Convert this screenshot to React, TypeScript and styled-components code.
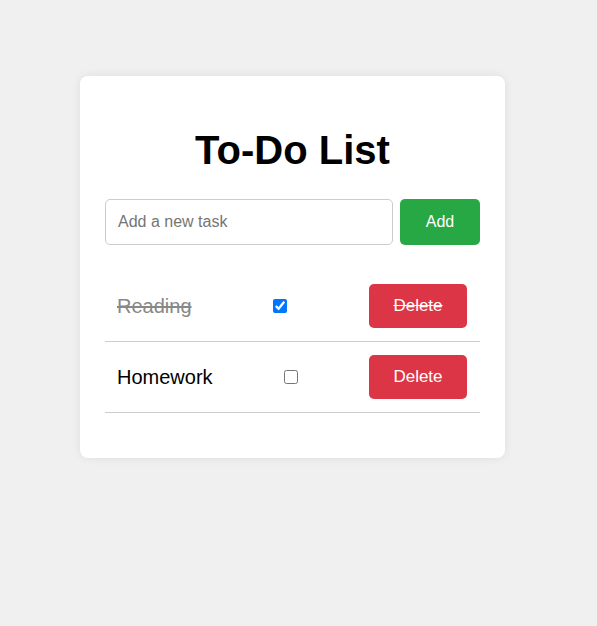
import {useState} from 'react';
import styled, {createGlobalStyle} from 'styled-components';

const GlobalStyle = createGlobalStyle`
  html, body {
    margin: 0;
    padding: 0;
    background: #f0f0f0;
    font-family: "Liberation Sans", Arial, sans-serif;
  }
`;

const Page = styled.div`
  min-height: 626px;
  padding: 76px 0 0 80px;
  box-sizing: border-box;
`;

const Card = styled.div`
  width: 425px;
  box-sizing: border-box;
  padding: 25px;
  background: #fff;
  border-radius: 8px;
  box-shadow: 0 0 10px rgba(0, 0, 0, 0.08);
`;

const Title = styled.h1`
  margin: 27px 0 26px;
  font-size: 40px;
  font-weight: bold;
  text-align: center;
  color: #000;
`;

const InputRow = styled.div`
  display: flex;
  gap: 7px;
`;

const TaskInput = styled.input`
  flex: 1;
  height: 46px;
  box-sizing: border-box;
  padding: 0 12px;
  border: 1px solid #ccc;
  border-radius: 5px;
  font-family: inherit;
  font-size: 16px;
  outline: none;
  &::placeholder {
    color: #757575;
  }
`;

const AddButton = styled.button`
  width: 80px;
  height: 46px;
  border: none;
  border-radius: 5px;
  background: #28a745;
  color: #fff;
  font-family: inherit;
  font-size: 16px;
  cursor: pointer;
`;

const List = styled.ul`
  list-style: none;
  margin: 26px 0 20px;
  padding: 0;
`;

const Item = styled.li<{done: boolean}>`
  display: flex;
  align-items: center;
  justify-content: space-between;
  padding: 13px 13px 13px 12px;
  border-bottom: 1px solid #ccc;
  color: ${p => (p.done ? '#888' : '#000')};
  text-decoration: ${p => (p.done ? 'line-through' : 'none')};
`;

const ItemText = styled.span`
  font-size: 20px;
`;

const Check = styled.input`
  width: 14px;
  height: 14px;
  margin: 0;
  cursor: pointer;
`;

const DeleteButton = styled.button<{done: boolean}>`
  width: 98px;
  height: 44px;
  border: none;
  border-radius: 5px;
  background: #dc3545;
  color: #fff;
  font-family: inherit;
  font-size: 17px;
  text-decoration: ${p => (p.done ? 'line-through' : 'none')};
  cursor: pointer;
`;

type Task = {id: number; text: string; done: boolean};

function App() {
  const [tasks, setTasks] = useState<Task[]>([
    {id: 1, text: 'Reading', done: true},
    {id: 2, text: 'Homework', done: false},
  ]);
  const [draft, setDraft] = useState('');

  const addTask = () => {
    if (!draft.trim()) return;
    setTasks(prev => [...prev, {id: Date.now(), text: draft.trim(), done: false}]);
    setDraft('');
  };
  const toggle = (id: number) =>
    setTasks(prev => prev.map(t => (t.id === id ? {...t, done: !t.done} : t)));
  const remove = (id: number) => setTasks(prev => prev.filter(t => t.id !== id));

  return (
    <Page>
      <GlobalStyle />
      <Card>
        <Title>To-Do List</Title>
        <InputRow>
          <TaskInput
            placeholder="Add a new task"
            value={draft}
            onChange={e => setDraft(e.target.value)}
          />
          <AddButton onClick={addTask}>Add</AddButton>
        </InputRow>
        <List>
          {tasks.map(task => (
            <Item key={task.id} done={task.done}>
              <ItemText>{task.text}</ItemText>
              <Check
                type="checkbox"
                checked={task.done}
                onChange={() => toggle(task.id)}
              />
              <DeleteButton done={task.done} onClick={() => remove(task.id)}>
                Delete
              </DeleteButton>
            </Item>
          ))}
        </List>
      </Card>
    </Page>
  );
}

export default App;
